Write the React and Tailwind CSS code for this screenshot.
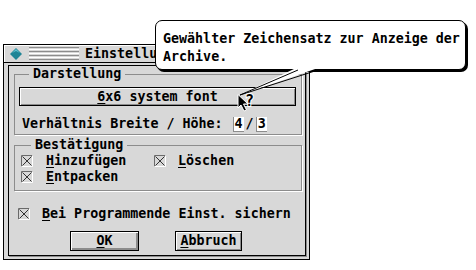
import React from "react";

const Check = () => (
  <svg width="12" height="12" viewBox="0 0 12 12" className="shrink-0">
    <rect x="0" y="0" width="12" height="12" fill="#d8d8d8" />
    <path d="M0.5 11.5V0.5H11.5" fill="none" stroke="#6a6a6a" />
    <path d="M11.5 0.5V11.5H0.5" fill="none" stroke="#ffffff" />
    <path d="M1.5 1.5L10.5 10.5M10.5 1.5L1.5 10.5" stroke="#333" />
  </svg>
);

const Btn = ({ children, className }) => (
  <div
    className={
      "flex items-center justify-center border border-black bg-[#d8d8d8] shadow-[inset_1px_1px_0_#fff,inset_-1px_-1px_0_#8c8c8c] " +
      className
    }
  >
    {children}
  </div>
);

const Field = ({ children }) => (
  <span className="flex h-[15px] w-[11px] items-center justify-center border-b border-l border-[#8c8c8c] bg-white">
    {children}
  </span>
);

export default function App() {
  return (
    <div className="relative h-[270px] w-[476px] overflow-hidden bg-white pl-[3px] pt-[44px] font-['DejaVu_Sans_Mono','Liberation_Mono',monospace] text-[13.33px] font-bold leading-4 text-black">
      {/* Fenster */}
      <div className="flex h-[216px] w-[307px] flex-col border border-black bg-[#d8d8d8]">
        {/* Titelzeile */}
        <div className="flex h-[18px] shrink-0 items-center border-b border-black pl-[6px] shadow-[inset_1px_1px_0_#fff]">
          <svg width="12" height="12" viewBox="0 0 12 12">
            <path d="M6 0L12 6L6 12L0 6Z" fill="#1f8596" />
            <path d="M6 1L2 5L6 3L10 5Z" fill="#5fc0cf" />
          </svg>
          <div className="ml-[7px] flex w-[50px] flex-col gap-[1px]">
            <div className="h-[1px] bg-[#8c8c8c]" />
            <div className="h-[1px] bg-white" />
            <div className="h-[1px] bg-[#8c8c8c]" />
            <div className="h-[1px] bg-white" />
            <div className="h-[1px] bg-[#8c8c8c]" />
            <div className="h-[1px] bg-white" />
            <div className="h-[1px] bg-[#8c8c8c]" />
          </div>
          <span className="ml-[6px] whitespace-nowrap">Einstellungen</span>
        </div>

        {/* Inhalt */}
        <div className="flex-1 p-[3px] pl-[4px] pt-[2px]">
          <div className="flex h-full flex-col border border-black pl-[5px] pr-[3px] shadow-[1px_1px_0_#8c8c8c]">
            <fieldset className="border border-[#8c8c8c] pb-[2px] pl-[4px] pr-[5px] shadow-[1px_1px_0_#fff]">
              <legend className="ml-[10px] px-[4px]">Darstellung</legend>
              <Btn className="mt-[5px] h-[19px]">
                <span>
                  <span className="underline underline-offset-2">6</span>x6 system font
                </span>
              </Btn>
              <div className="mt-[10px] flex items-center pl-[3px]">
                <span>Verhältnis Breite / Höhe:</span>
                <span className="ml-[10px]">
                  <Field>4</Field>
                </span>
                <span className="mx-[2px]">/</span>
                <Field>3</Field>
              </div>
            </fieldset>

            <fieldset className="mt-[2px] border border-[#8c8c8c] pb-[5px] pl-[6px] shadow-[1px_1px_0_#fff]">
              <legend className="ml-[10px] px-[4px]">Bestätigung</legend>
              <div className="grid grid-cols-[133px_1fr]">
                <div className="flex items-center gap-[13px]">
                  <Check />
                  <span>
                    <span className="underline underline-offset-2">H</span>inzufügen
                  </span>
                </div>
                <div className="flex items-center gap-[12px]">
                  <Check />
                  <span>
                    <span className="underline underline-offset-2">L</span>öschen
                  </span>
                </div>
                <div className="flex items-center gap-[13px]">
                  <Check />
                  <span>
                    <span className="underline underline-offset-2">E</span>ntpacken
                  </span>
                </div>
              </div>
            </fieldset>

            <div className="mt-[15px] flex items-center gap-[12px] pl-[4px]">
              <Check />
              <span>
                <span className="underline underline-offset-2">B</span>ei Programmende Einst. sichern
              </span>
            </div>

            <div className="mt-[9px] flex pl-[56px]">
              <Btn className="h-[20px] w-[69px] shadow-[inset_1px_1px_0_#fff,inset_-2px_-2px_0_#8c8c8c]">
                <span className="underline underline-offset-2">O</span>K
              </Btn>
              <Btn className="ml-[36px] h-[20px] w-[67px]">
                <span>
                  <span className="underline underline-offset-2">A</span>bbruch
                </span>
              </Btn>
            </div>
          </div>
        </div>
      </div>

      {/* Sprechblase */}
      <div className="absolute left-[155px] top-[20px] h-[50px] w-[311px] rounded-[7px] border border-black bg-white pl-[7px] pt-[9px] leading-[18px] shadow-[2px_2px_0_#000]">
        Gewählter Zeichensatz zur Anzeige der
        <br />
        Archive.
      </div>
      <svg className="absolute left-[235px] top-[66px]" width="90" height="34" viewBox="235 66 90 34">
        <path d="M296 68L318 68L240 95Z" fill="#fff" />
        <path d="M298 70L240 95L318 70" fill="none" stroke="#000" />
      </svg>

      {/* Hilfe-Cursor */}
      <svg className="absolute left-[236px] top-[93px]" width="20" height="20" viewBox="0 0 20 20">
        <path d="M2 1.5V15L5 12L8 18L10.5 17L7.5 11H12Z" fill="#000" stroke="#fff" />
        <text x="9" y="13" fontFamily="DejaVu Sans Mono" fontWeight="bold" fontSize="15" fill="#000" stroke="#fff" strokeWidth="2" paintOrder="stroke">?</text>
      </svg>
    </div>
  );
}
